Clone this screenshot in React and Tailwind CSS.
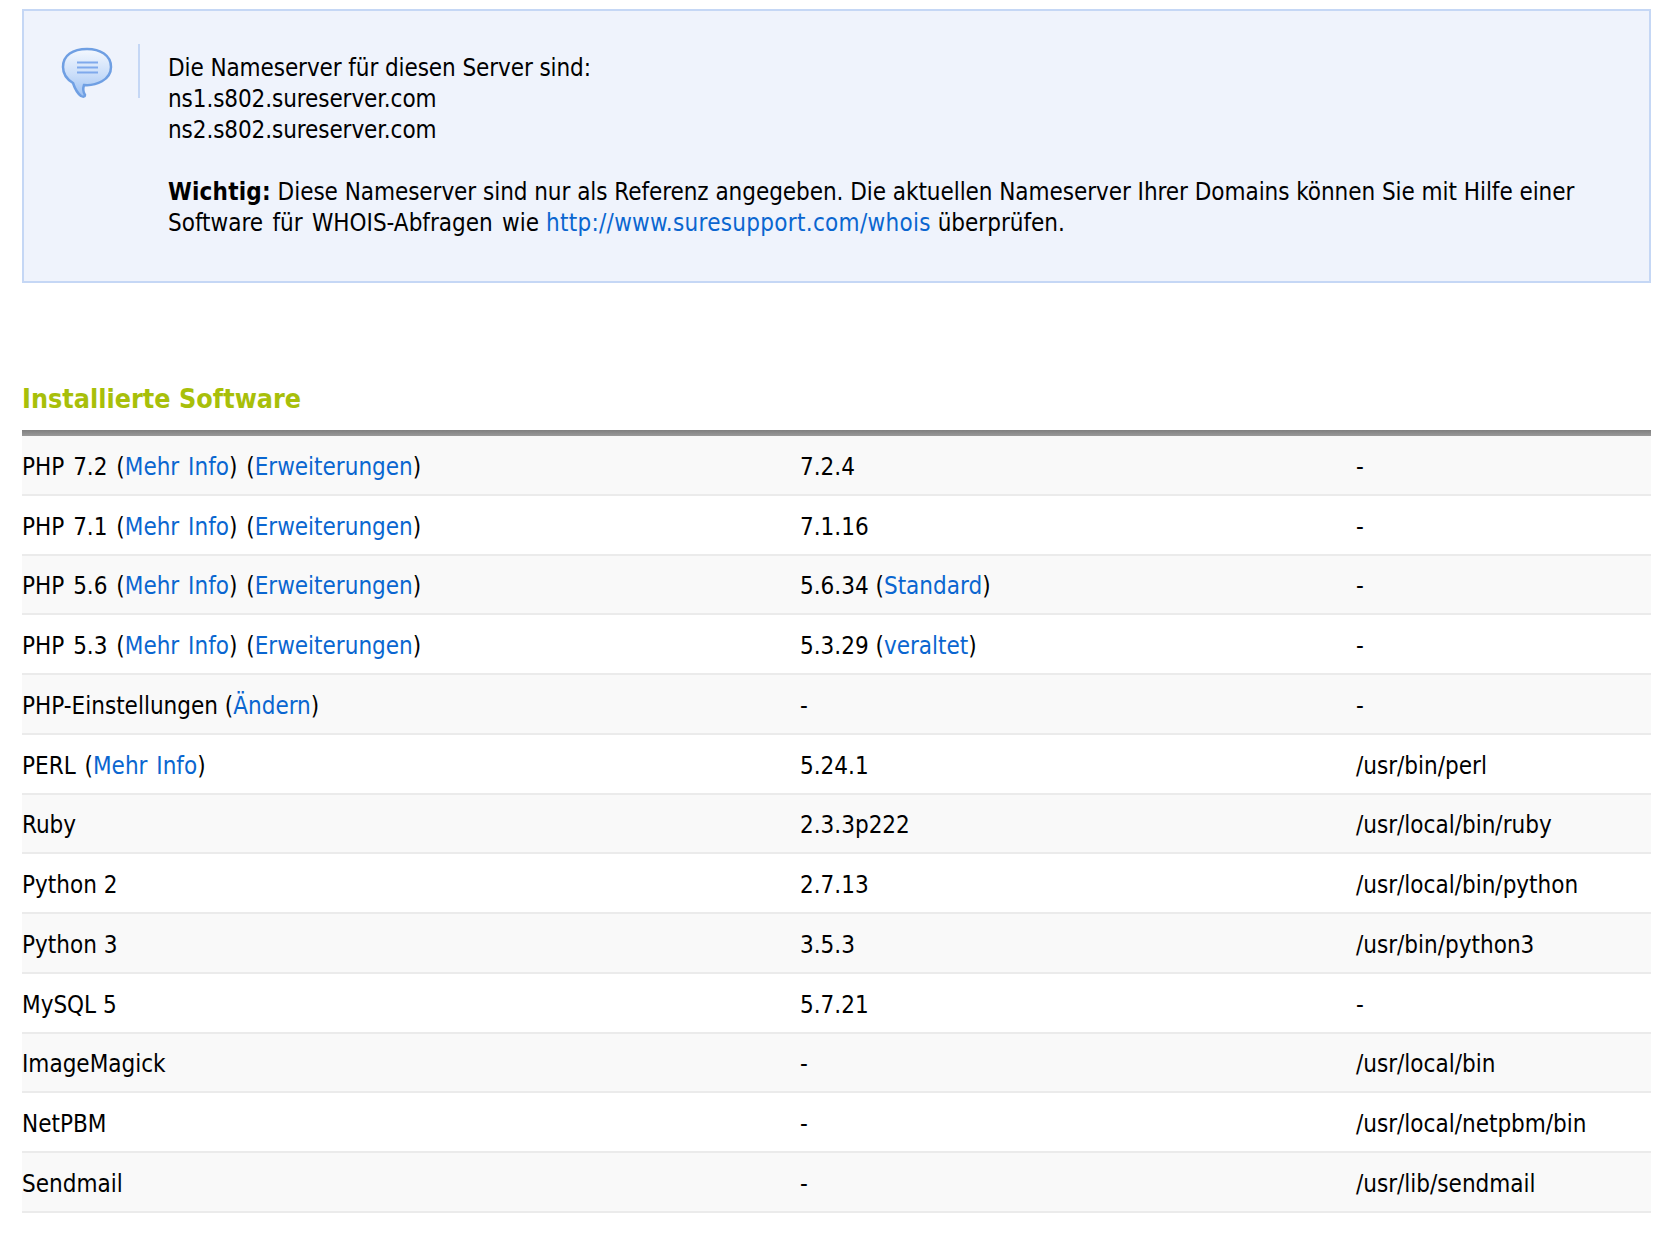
const rows = [
  [<W>PHP 7.2 (<L>Mehr Info</L>) (<L>Erweiterungen</L>)</W>, "7.2.4", "-"],
  [<W>PHP 7.1 (<L>Mehr Info</L>) (<L>Erweiterungen</L>)</W>, "7.1.16", "-"],
  [<W>PHP 5.6 (<L>Mehr Info</L>) (<L>Erweiterungen</L>)</W>, <>5.6.34 (<L>Standard</L>)</>, "-"],
  [<W>PHP 5.3 (<L>Mehr Info</L>) (<L>Erweiterungen</L>)</W>, <>5.3.29 (<L>veraltet</L>)</>, "-"],
  [<>PHP-Einstellungen (<L>Ändern</L>)</>, "-", "-"],
  [<W>PERL (<L>Mehr Info</L>)</W>, "5.24.1", "/usr/bin/perl"],
  ["Ruby", "2.3.3p222", "/usr/local/bin/ruby"],
  ["Python 2", "2.7.13", "/usr/local/bin/python"],
  ["Python 3", "3.5.3", "/usr/bin/python3"],
  ["MySQL 5", "5.7.21", "-"],
  ["ImageMagick", "-", "/usr/local/bin"],
  ["NetPBM", "-", "/usr/local/netpbm/bin"],
  ["Sendmail", "-", "/usr/lib/sendmail"],
];

function L({ children }) {
  return <a href="#" className="text-[#0a66d0]">{children}</a>;
}

function W({ children }) {
  return <span className="[word-spacing:2px]">{children}</span>;
}

function Bubble() {
  return (
    <svg width="52" height="52" viewBox="0 0 52 52" className="shrink-0">
      <defs>
        <linearGradient id="bub" x1="0" y1="0" x2="0" y2="1">
          <stop offset="0" stopColor="#f4f8fe" />
          <stop offset="0.55" stopColor="#c9ddf9" />
          <stop offset="1" stopColor="#9cc0f2" />
        </linearGradient>
      </defs>
      <path
        d="M26 2C12 2 2 8 2 20c0 8 5 13 10 16 1 3 3 9 8 13 2 1 4 1 4 -1-2-3-2-7-1-10 12 1 27-5 27-18C50 8 39 2 26 2z"
        fill="url(#bub)"
        stroke="#6f9fe3"
        strokeWidth="2.5"
      />
      <path d="M16 15.5h21M16 20.5h21M16 25.5h21" stroke="#7fa9ec" strokeWidth="2" />
    </svg>
  );
}

export default function App() {
  return (
    <div className="bg-white min-h-[1234px] pt-[9px] pl-[22px] pr-[22px] text-black text-[24px] leading-[31px] font-['DejaVu_Sans',sans-serif] [font-stretch:condensed]">
      <div className="h-[274px] border-2 border-[#c5d7f5] bg-[#eff3fc] flex items-start pt-[33px] pl-[37px] pr-[70px]">
        <div className="mt-[3px] w-[77px] shrink-0 h-[54px]">
          <Bubble />
        </div>
        <div className="w-[2px] h-[54px] bg-[#c5d7f5] shrink-0" />
        <div className="pl-[28px] pt-[9px]">
          <div className="tracking-[-0.09px]">Die Nameserver für diesen Server sind:</div>
          <div className="tracking-[-0.09px]">ns1.s802.sureserver.com</div>
          <div className="tracking-[-0.09px]">ns2.s802.sureserver.com</div>
          <div className="h-[31px]" />
          <div>
            <span className="tracking-[-0.05px]">
              <b className="tracking-[0.2px]">Wichtig:</b> Diese Nameserver sind nur als Referenz angegeben. Die aktuellen Nameserver Ihrer Domains können Sie mit Hilfe einer
            </span>{" "}
            <span className="[word-spacing:2.5px]">Software für WHOIS-Abfragen wie</span>{" "}
            <span className="tracking-[0.3px]"><L>http://www.suresupport.com/whois</L></span> überprüfen.
          </div>
        </div>
      </div>
      <h2 className="mt-[98px] h-[49px] text-[26.7px] leading-[36px] font-bold text-[#a8bf0a]">Installierte Software</h2>
      <div className="h-[6px] bg-gradient-to-b from-[#808080] to-[#9a9a9a]" />
      <div>
        {rows.map((r, i) => (
          <div
            key={i}
            className={`grid grid-cols-[778px_556px_1fr] items-center h-[59.75px] pt-[5px] border-b-2 border-[#ebebeb] ${i % 2 === 0 ? "bg-[#f9f9f9]" : "bg-white"}`}
          >
            <div>{r[0]}</div>
            <div>{r[1]}</div>
            <div>{r[2]}</div>
          </div>
        ))}
      </div>
    </div>
  );
}
